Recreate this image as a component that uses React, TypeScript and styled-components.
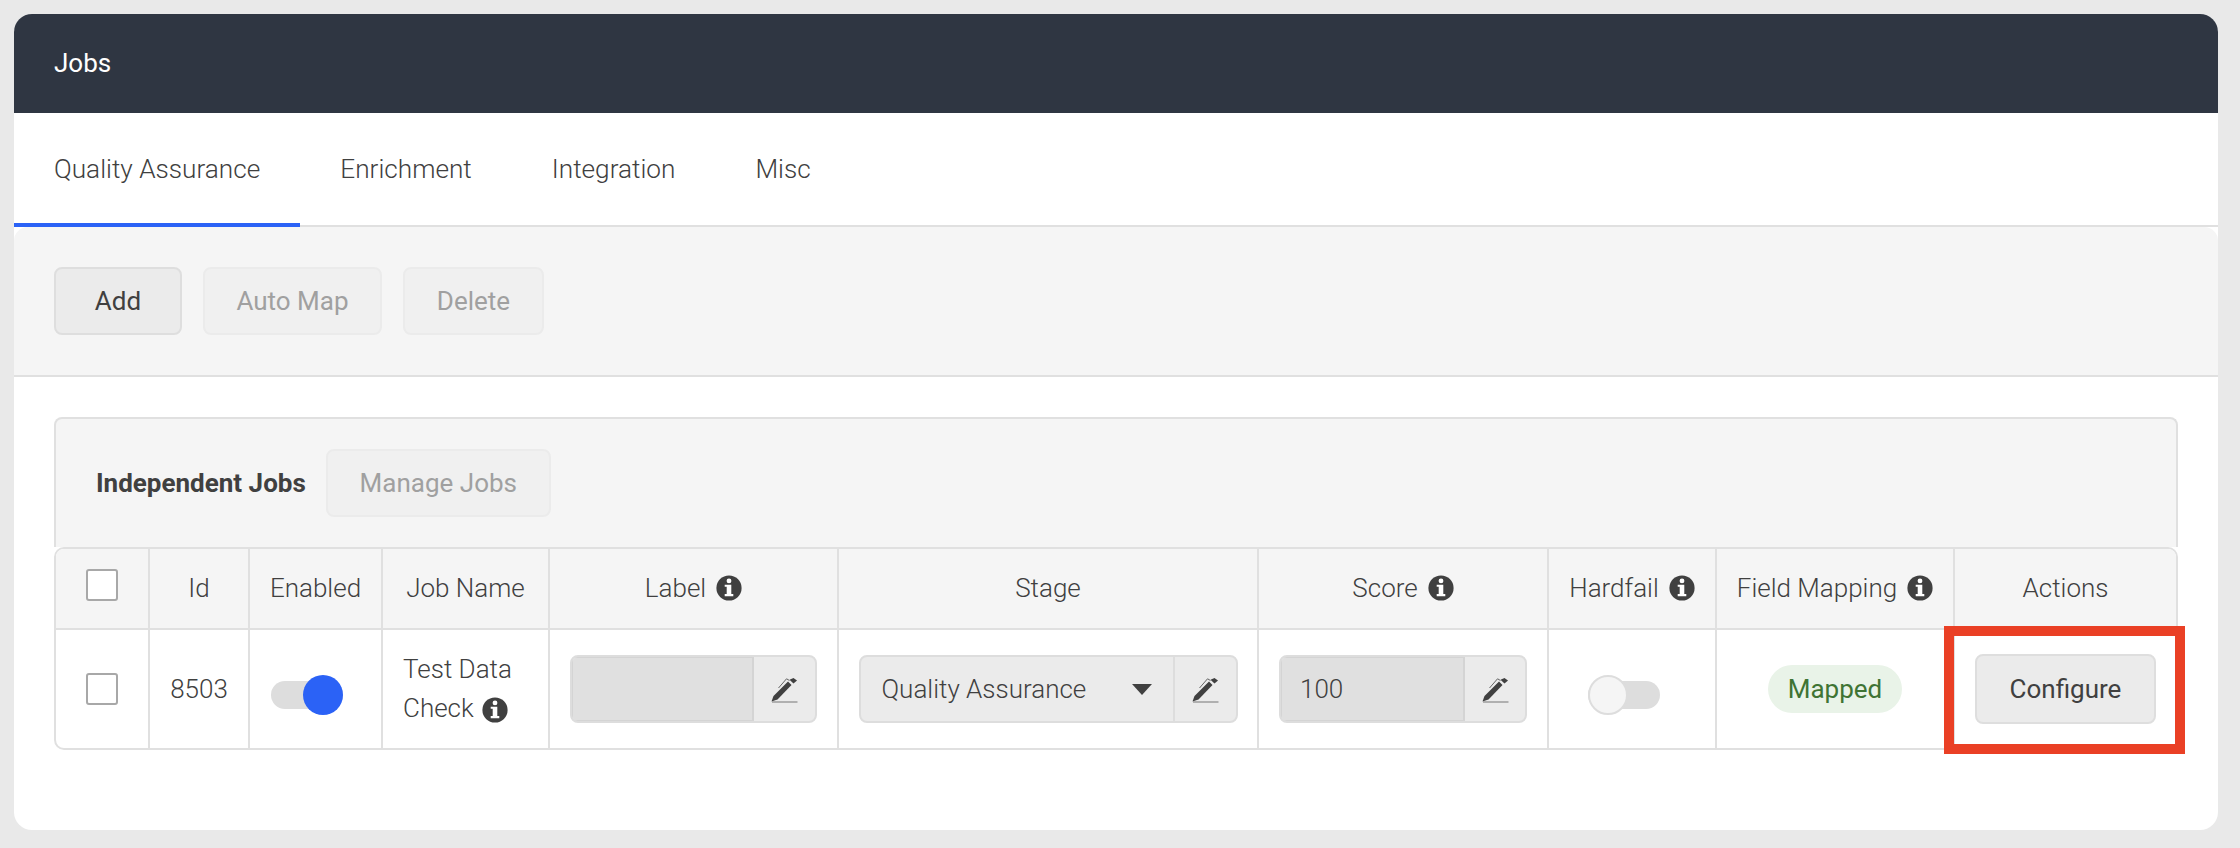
import React from "react";
import styled, { createGlobalStyle } from "styled-components";

const Global = createGlobalStyle`
  html, body { margin: 0; padding: 0; background: #e9e9e9; }
  body { font-family: Roboto, "Liberation Sans", sans-serif; color: #404040; }
`;

const Page = styled.div`
  width: 2240px;
  height: 848px;
  padding: 14px 22px 18px 14px;
  box-sizing: border-box;
`;

const Card = styled.section`
  background: #fff;
  border-radius: 18px;
  height: 816px;
  overflow: hidden;
`;

const Header = styled.header`
  height: 99px;
  background: #2f3642;
  color: #fff;
  font-size: 26px;
  font-weight: 400;
  display: flex;
  align-items: center;
  padding: 0 0 1px 40px;
  box-sizing: border-box;
`;

const Tabs = styled.nav`
  height: 114px;
  display: flex;
  border-bottom: 2px solid #e0e0e0;
  box-sizing: border-box;
`;

const Tab = styled.div<{ $active?: boolean }>`
  padding: 2px 40px 0;
  height: 114px;
  box-sizing: border-box;
  display: flex;
  align-items: center;
  font-size: 26.2px;
  font-weight: 300;
  color: #404040;
  border-bottom: 4px solid ${(p) => (p.$active ? "#2b62f6" : "transparent")};
`;

const Toolbar = styled.div`
  height: 150px;
  box-sizing: border-box;
  background: #f5f5f5;
  border-bottom: 2px solid #e0e0e0;
  border-radius: 14px 14px 0 0;
  display: flex;
  align-items: center;
  gap: 21px;
  padding: 0 40px;
`;

const Button = styled.button<{ $disabled?: boolean; $w: number }>`
  width: ${(p) => p.$w}px;
  height: 68px;
  box-sizing: border-box;
  border-radius: 8px;
  border: 2px solid ${(p) => (p.$disabled ? "#ebebeb" : "#dedede")};
  background: ${(p) => (p.$disabled ? "#f0f0f0" : "#ebebeb")};
  color: ${(p) => (p.$disabled ? "#a0a0a0" : "#404040")};
  font-family: inherit;
  font-size: 26px;
  font-weight: 400;
  padding: 0;
`;

const Body = styled.div`
  padding: 40px 40px 0;
  position: relative;
`;

const PanelHead = styled.div`
  height: 130px;
  box-sizing: border-box;
  background: #f5f5f5;
  border: 2px solid #e0e0e0;
  border-bottom: 0;
  border-radius: 8px 8px 0 0;
  display: flex;
  align-items: center;
  gap: 20px;
  padding: 0 0 0 40px;
`;

const PanelTitle = styled.div`
  font-size: 26px;
  font-weight: 700;
  color: #404040;
`;

const Grid = styled.div`
  display: grid;
  grid-template-columns: 94px 100px 133px 167px 289px 420px 290px 168px 238px 221px;
  grid-template-rows: 81px 118px;
  border: 2px solid #e0e0e0;
  border-radius: 10px;
  box-sizing: border-box;
  width: 2124px;
  overflow: hidden;
`;

const HeadCell = styled.div<{ $last?: boolean }>`
  background: #f5f5f5;
  border-right: ${(p) => (p.$last ? "0" : "2px solid #e0e0e0")};
  border-bottom: 2px solid #e0e0e0;
  display: flex;
  align-items: center;
  justify-content: center;
  gap: 10px;
  padding-bottom: 1px;
  font-size: 26px;
  font-weight: 300;
  color: #404040;
  box-sizing: border-box;
`;

const Cell = styled.div<{ $last?: boolean }>`
  border-right: ${(p) => (p.$last ? "0" : "2px solid #e0e0e0")};
  display: flex;
  align-items: center;
  justify-content: center;
  font-size: 26px;
  font-weight: 300;
  color: #404040;
  box-sizing: border-box;
`;

const Check = styled.span<{ $raised?: boolean }>`
  display: block;
  width: 32px;
  height: 32px;
  box-sizing: border-box;
  border: 2px solid #a8a8a8;
  border-radius: 3px;
  background: #fff;
  margin-bottom: ${(p) => (p.$raised ? "7px" : "0")};
`;

const JobName = styled.div`
  line-height: 39px;
  padding: 0 0 0 20px;
  width: 100%;
  box-sizing: border-box;
`;

const InfoSvg = styled.svg<{ $inline?: boolean }>`
  width: 26px;
  height: 26px;
  flex: none;
  vertical-align: -6px;
  margin-left: ${(p) => (p.$inline ? "2px" : "0")};
`;

const Info = ({ inline }: { inline?: boolean }) => (
  <InfoSvg $inline={inline} viewBox="0 0 26 26" aria-hidden="true">
    <circle cx="13" cy="13" r="12.6" fill="#404040" />
    <circle cx="13" cy="5.9" r="2.4" fill="#fff" />
    <path d="M8.7 9.7 H15.3 V19 H17.3 V21.3 H8.7 V19 H10.7 V11.7 H8.7 Z" fill="#fff" />
  </InfoSvg>
);

const Toggle = styled.span`
  position: relative;
  display: block;
  width: 72px;
  height: 28px;
  border-radius: 14px;
  background: #dddddd;
  margin: 11px 17px 0 0;
`;

const Knob = styled.span<{ $on?: boolean }>`
  position: absolute;
  top: -6px;
  ${(p) => (p.$on ? "right: 0;" : "left: 0;")}
  width: 40px;
  height: 40px;
  box-sizing: border-box;
  border-radius: 50%;
  background: ${(p) => (p.$on ? "#2b62f6" : "#f5f5f5")};
  border: ${(p) => (p.$on ? "0" : "2px solid #dddddd")};
`;

const Group = styled.div`
  display: flex;
  height: 68px;
  box-sizing: border-box;
  border: 2px solid #dddddd;
  border-radius: 8px;
  overflow: hidden;
  background: #ebebeb;
`;

const InputBox = styled.div<{ $w: number }>`
  width: ${(p) => p.$w}px;
  background: #e0e0e0;
  border-right: 2px solid #d4d4d4;
  box-shadow: inset 0 1px 0 #d4d4d4, inset 1px 0 0 #d4d4d4, inset 0 -1px 0 #d4d4d4;
  display: flex;
  align-items: center;
  padding-left: 19px;
  box-sizing: border-box;
  font-size: 26px;
  font-weight: 300;
`;

const SelectBox = styled.div`
  width: 314px;
  border-right: 2px solid #dddddd;
  display: flex;
  align-items: center;
  justify-content: space-between;
  padding: 0 21px 0 21px;
  box-sizing: border-box;
  font-size: 26px;
  font-weight: 300;
`;

const Caret = styled.span`
  width: 0;
  height: 0;
  border-left: 10px solid transparent;
  border-right: 10px solid transparent;
  border-top: 11px solid #404040;
`;

const PenBox = styled.div<{ $w: number }>`
  width: ${(p) => p.$w}px;
  display: flex;
  align-items: center;
  justify-content: center;
`;

const Pill = styled.span`
  display: flex;
  align-items: center;
  justify-content: center;
  width: 134px;
  height: 48px;
  border-radius: 24px;
  background: #e9f3e8;
  color: #3f7434;
  font-size: 26px;
  font-weight: 400;
`;

const Configure = styled.button`
  width: 181px;
  height: 70px;
  box-sizing: border-box;
  border: 2px solid #dedede;
  border-radius: 8px;
  background: #ebebeb;
  color: #404040;
  font-family: inherit;
  font-size: 26px;
  font-weight: 400;
  padding: 0;
`;

const Highlight = styled.div`
  position: absolute;
  left: 1930px;
  top: 249px;
  width: 241px;
  height: 128px;
  box-sizing: border-box;
  border: 10px solid #ea4025;
  pointer-events: none;
`;

const Pen = () => (
  <svg width="27" height="27" viewBox="0 0 27 27" aria-hidden="true">
    <path d="M0.5 25.5 L2.5 20 L17 5.5 L20.5 9 L6.5 23.5 Z" fill="#404040" />
    <path d="M18.5 3.8 L22.5 2 L26 4.5 L22.5 7.6 Z" fill="#404040" />
    <path d="M7.5 12 L15.5 2.8 L18.5 4.5" stroke="#555" strokeWidth="0.9" fill="none" />
    <path d="M1 26 H26.5" stroke="#777" strokeWidth="1.1" />
  </svg>
);

export default function App() {
  return (
    <Page>
      <Global />
      <Card>
        <Header>Jobs</Header>
        <Tabs>
          <Tab $active>Quality Assurance</Tab>
          <Tab>Enrichment</Tab>
          <Tab>Integration</Tab>
          <Tab>Misc</Tab>
        </Tabs>
        <Toolbar>
          <Button $w={128}>Add</Button>
          <Button $w={179} $disabled>Auto Map</Button>
          <Button $w={141} $disabled>Delete</Button>
        </Toolbar>
        <Body>
          <PanelHead>
            <PanelTitle>Independent Jobs</PanelTitle>
            <Button $w={225} $disabled>Manage Jobs</Button>
          </PanelHead>
          <Grid>
            <HeadCell><Check $raised /></HeadCell>
            <HeadCell>Id</HeadCell>
            <HeadCell>Enabled</HeadCell>
            <HeadCell>Job Name</HeadCell>
            <HeadCell>Label <Info /></HeadCell>
            <HeadCell>Stage</HeadCell>
            <HeadCell>Score <Info /></HeadCell>
            <HeadCell>Hardfail <Info /></HeadCell>
            <HeadCell>Field Mapping <Info /></HeadCell>
            <HeadCell $last>Actions</HeadCell>

            <Cell><Check /></Cell>
            <Cell>8503</Cell>
            <Cell><Toggle><Knob $on /></Toggle></Cell>
            <Cell>
              <JobName>Test Data<br />Check <Info inline /></JobName>
            </Cell>
            <Cell>
              <Group>
                <InputBox $w={182} />
                <PenBox $w={61}><Pen /></PenBox>
              </Group>
            </Cell>
            <Cell>
              <Group>
                <SelectBox>Quality Assurance<Caret /></SelectBox>
                <PenBox $w={61}><Pen /></PenBox>
              </Group>
            </Cell>
            <Cell>
              <Group>
                <InputBox $w={184}>100</InputBox>
                <PenBox $w={60}><Pen /></PenBox>
              </Group>
            </Cell>
            <Cell><Toggle><Knob /></Toggle></Cell>
            <Cell><Pill>Mapped</Pill></Cell>
            <Cell $last><Configure>Configure</Configure></Cell>
          </Grid>
          <Highlight />
        </Body>
      </Card>
    </Page>
  );
}
